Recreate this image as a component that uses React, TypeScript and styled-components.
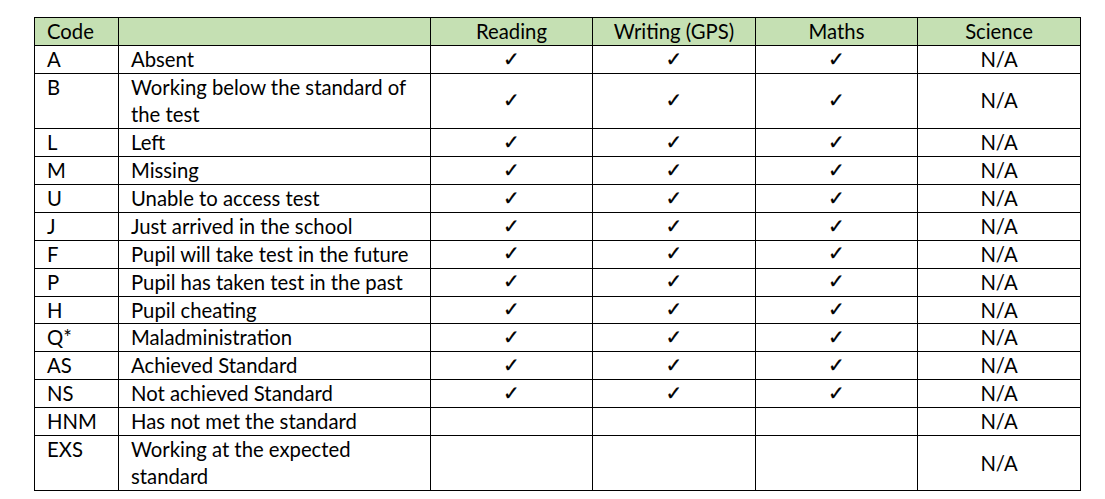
import React from "react";
import styled, { createGlobalStyle } from "styled-components";

const Global = createGlobalStyle`
  html, body { margin: 0; padding: 0; background: #ffffff; }
  body { font-family: "Lato", "Liberation Sans", sans-serif; color: #000; }
`;

const Page = styled.div`
  padding: 17px 0 0 34px;
`;

const Table = styled.table`
  border-collapse: collapse;
  table-layout: fixed;
  width: 1046px;
  font-size: 20.3px;
  line-height: 26.95px;
`;

const HeadRow = styled.tr`
  background: #c5e0b3;
`;

const Th = styled.th<{ $align?: "left" | "center" }>`
  border: 1px solid #000;
  padding: 0 12px;
  font-weight: 400;
  text-align: ${(p) => p.$align ?? "center"};
  vertical-align: middle;
`;

const Td = styled.td<{ $align?: "left" | "center"; $valign?: "top" | "middle" }>`
  border: 1px solid #000;
  padding: 0 12px;
  text-align: ${(p) => p.$align ?? "center"};
  vertical-align: ${(p) => p.$valign ?? "middle"};
`;

const Check = styled.span`
  display: inline-block;
  font-family: "DejaVu Sans", sans-serif;
  font-size: 20px;
  line-height: 1;
  vertical-align: middle;
  position: relative;
  top: -3px;
  -webkit-text-stroke: 0.3px #000;
`;

type Row = { code: string; desc: React.ReactNode; checks: boolean };

const rows: Row[] = [
  { code: "A", desc: "Absent", checks: true },
  { code: "B", desc: <>Working below the standard of<br />the test</>, checks: true },
  { code: "L", desc: "Left", checks: true },
  { code: "M", desc: "Missing", checks: true },
  { code: "U", desc: "Unable to access test", checks: true },
  { code: "J", desc: "Just arrived in the school", checks: true },
  { code: "F", desc: "Pupil will take test in the future", checks: true },
  { code: "P", desc: "Pupil has taken test in the past", checks: true },
  { code: "H", desc: "Pupil cheating", checks: true },
  { code: "Q*", desc: "Maladministration", checks: true },
  { code: "AS", desc: "Achieved Standard", checks: true },
  { code: "NS", desc: "Not achieved Standard", checks: true },
  { code: "HNM", desc: "Has not met the standard", checks: false },
  { code: "EXS", desc: <>Working at the expected<br />standard</>, checks: false },
];

export default function App() {
  return (
    <>
      <Global />
      <Page>
        <Table>
          <colgroup>
            <col style={{ width: 84 }} />
            <col style={{ width: 312 }} />
            <col style={{ width: 162 }} />
            <col style={{ width: 163 }} />
            <col style={{ width: 162 }} />
            <col style={{ width: 163 }} />
          </colgroup>
          <thead>
            <HeadRow>
              <Th $align="left">Code</Th>
              <Th $align="left"></Th>
              <Th>Reading</Th>
              <Th>Writing (GPS)</Th>
              <Th>Maths</Th>
              <Th>Science</Th>
            </HeadRow>
          </thead>
          <tbody>
            {rows.map((r) => (
              <tr key={r.code}>
                <Td $align="left" $valign="top">{r.code}</Td>
                <Td $align="left" $valign="top">{r.desc}</Td>
                <Td>{r.checks ? <Check>✓</Check> : null}</Td>
                <Td>{r.checks ? <Check>✓</Check> : null}</Td>
                <Td>{r.checks ? <Check>✓</Check> : null}</Td>
                <Td>N/A</Td>
              </tr>
            ))}
          </tbody>
        </Table>
      </Page>
    </>
  );
}
